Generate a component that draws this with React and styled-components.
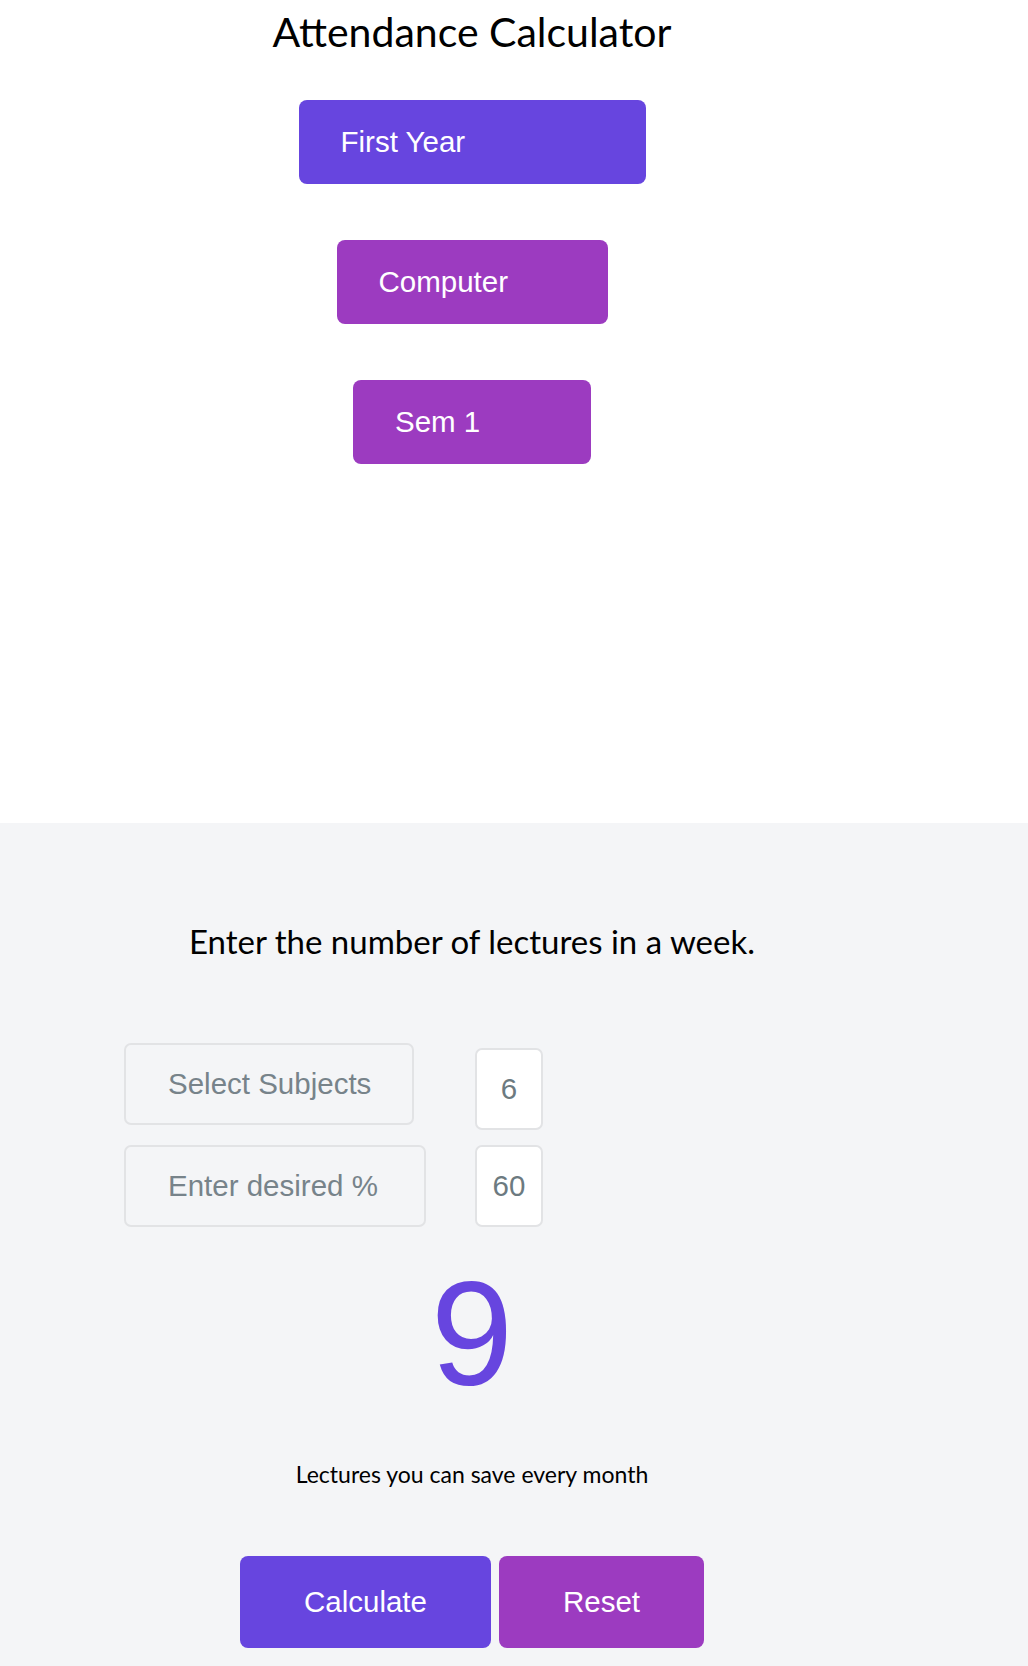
import React from "react";
import styled, { createGlobalStyle } from "styled-components";

const GlobalStyle = createGlobalStyle`
  html, body { margin: 0; padding: 0; background: #ffffff; }
  body { font-family: "Liberation Sans", Arial, sans-serif; color: #000; }
  * { box-sizing: border-box; }
`;

const ROUND = `"Lato", "Noto Sans", sans-serif`;
const ARIAL = `"Liberation Sans", Arial, sans-serif`;

const TopSection = styled.section`
  height: 823px;
  background: #ffffff;
`;

const Column = styled.div`
  width: 944px;
  display: flex;
  flex-direction: column;
  align-items: center;
`;

const Title = styled.h1`
  margin: 8px 0 0;
  font-family: ${ROUND};
  font-weight: 400;
  font-size: 41px;
  line-height: 48px;
  color: #000;
`;

const Picker = styled.div`
  width: ${(p) => p.$w}px;
  height: 84px;
  margin-top: ${(p) => p.$mt}px;
  padding-left: 42px;
  display: flex;
  align-items: center;
  border-radius: 8px;
  background: ${(p) => (p.$primary ? "#6745df" : "#9c3bc0")};
  color: #ffffff;
  font-family: ${ARIAL};
  font-size: 29.5px;
`;

const BottomSection = styled.section`
  background: #f4f5f7;
  padding: 98px 0 18px;
`;

const Prompt = styled.p`
  margin: 0;
  font-family: ${ROUND};
  font-size: 33px;
  line-height: 40px;
  color: #000;
`;

const InputGrid = styled.div`
  align-self: flex-start;
  margin: 82px 0 0 124px;
  display: grid;
  grid-template-columns: 351px 68px;
  row-gap: 15px;
  align-items: start;
`;

const FieldBox = styled.div`
  width: ${(p) => p.$w}px;
  height: 82px;
  display: flex;
  align-items: center;
  padding-left: 42px;
  border: 2px solid #e2e3e5;
  border-radius: 7px;
  background: #f4f5f7;
  color: #77838a;
  font-family: ${ARIAL};
  font-size: 29.5px;
`;

const NumberBox = styled.div`
  width: 68px;
  height: 82px;
  margin-top: ${(p) => p.$mt || 0}px;
  display: flex;
  align-items: center;
  justify-content: center;
  border: 2px solid #e2e3e5;
  border-radius: 7px;
  background: #ffffff;
  color: #6c7a80;
  font-family: ${ARIAL};
  font-size: 29.5px;
`;

const Result = styled.div`
  margin-top: 22px;
  font-family: ${ARIAL};
  font-size: 148px;
  line-height: 170px;
  color: #6745df;
`;

const Caption = styled.p`
  margin: 41px 0 0;
  font-family: ${ROUND};
  font-size: 23px;
  line-height: 28px;
  color: #000;
`;

const ActionRow = styled.div`
  margin-top: 68px;
  display: flex;
  gap: 8px;
`;

const ActionButton = styled.button`
  height: 92px;
  padding: 0 64px;
  border: none;
  border-radius: 8px;
  background: ${(p) => (p.$primary ? "#6745df" : "#9c3bc0")};
  color: #ffffff;
  font-family: ${ARIAL};
  font-size: 29.5px;
  cursor: pointer;
`;

export default function App() {
  return (
    <>
      <GlobalStyle />
      <TopSection>
        <Column>
          <Title>Attendance Calculator</Title>
          <Picker $primary $w={347} $mt={44}>First Year</Picker>
          <Picker $w={271} $mt={56}>Computer</Picker>
          <Picker $w={238} $mt={56}>Sem 1</Picker>
        </Column>
      </TopSection>
      <BottomSection>
        <Column>
          <Prompt>Enter the number of lectures in a week.</Prompt>
          <InputGrid>
            <FieldBox $w={290}>Select Subjects</FieldBox>
            <NumberBox $mt={5}>6</NumberBox>
            <FieldBox $w={302}>Enter desired %</FieldBox>
            <NumberBox>60</NumberBox>
          </InputGrid>
          <Result>9</Result>
          <Caption>Lectures you can save every month</Caption>
          <ActionRow>
            <ActionButton $primary>Calculate</ActionButton>
            <ActionButton>Reset</ActionButton>
          </ActionRow>
        </Column>
      </BottomSection>
    </>
  );
}
